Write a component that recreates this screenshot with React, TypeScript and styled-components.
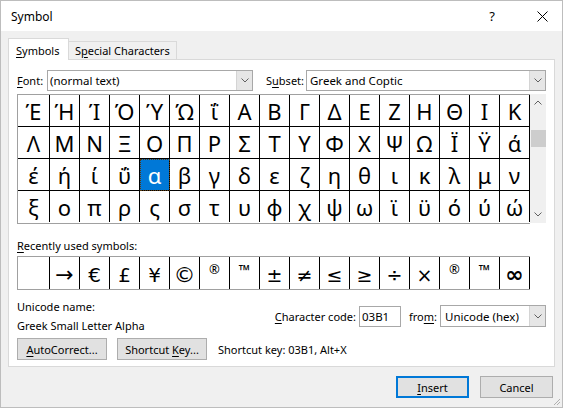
import styled, { createGlobalStyle } from "styled-components";

const GlobalStyle = createGlobalStyle`
  * { box-sizing: border-box; }
  html, body { margin: 0; padding: 0; background: #fff; }
  body {
    font-family: "Noto Sans", "Open Sans", sans-serif;
    font-size: 11px;
    color: #000;
  }
`;

const symbols: string[][] = [
  ["Έ", "Ή", "Ί", "Ό", "Ύ", "Ώ", "ΐ", "Α", "Β", "Γ", "Δ", "Ε", "Ζ", "Η", "Θ", "Ι", "Κ"],
  ["Λ", "Μ", "Ν", "Ξ", "Ο", "Π", "Ρ", "Σ", "Τ", "Υ", "Φ", "Χ", "Ψ", "Ω", "Ϊ", "Ϋ", "ά"],
  ["έ", "ή", "ί", "ΰ", "α", "β", "γ", "δ", "ε", "ζ", "η", "θ", "ι", "κ", "λ", "μ", "ν"],
  ["ξ", "ο", "π", "ρ", "ς", "σ", "τ", "υ", "φ", "χ", "ψ", "ω", "ϊ", "ϋ", "ό", "ύ", "ώ"],
];

interface RecentSymbol {
  char: string;
  size: number;
  raise?: boolean;
  bold?: boolean;
}

const recent: RecentSymbol[] = [
  { char: "", size: 20 },
  { char: "→", size: 22 },
  { char: "€", size: 20 },
  { char: "£", size: 20 },
  { char: "¥", size: 20 },
  { char: "©", size: 22 },
  { char: "®", size: 13, raise: true },
  { char: "™", size: 15, raise: true, bold: true },
  { char: "±", size: 19 },
  { char: "≠", size: 19 },
  { char: "≤", size: 19 },
  { char: "≥", size: 19 },
  { char: "÷", size: 19 },
  { char: "×", size: 19 },
  { char: "®", size: 13, raise: true },
  { char: "™", size: 15, raise: true, bold: true },
  { char: "∞", size: 22, bold: true },
];

const Window = styled.div`
  position: relative;
  width: 563px;
  height: 408px;
  border: 1px solid #bdbdbd;
  background: #f0f0f0;
  display: flex;
  flex-direction: column;
`;

const TitleBar = styled.div`
  height: 30px;
  background: #fff;
  display: flex;
  align-items: center;
  padding-left: 10px;
  font-size: 12px;
`;

const Title = styled.div`
  flex: 1;
`;

const TitleButton = styled.div<{ $gap?: number }>`
  width: 40px;
  height: 30px;
  display: flex;
  align-items: center;
  justify-content: center;
  margin-right: ${({ $gap }) => $gap ?? 0}px;
  font-size: 13px;
`;

const Body = styled.div`
  padding: 7px 7px 0 7px;
  display: flex;
  flex-direction: column;
`;

const TabStrip = styled.div`
  display: flex;
  align-items: flex-end;
  height: 22px;
  margin-bottom: -1px;
  position: relative;
  z-index: 1;
`;

const Tab = styled.div<{ $active?: boolean; $width: number }>`
  width: ${({ $width }) => $width}px;
  height: ${({ $active }) => ($active ? 22 : 19)}px;
  padding: ${({ $active }) => ($active ? "2px 0 0 7px" : "0 0 0 6px")};
  border: 1px solid #d9d9d9;
  border-left: ${({ $active }) => ($active ? "1px solid #d9d9d9" : "none")};
  border-bottom: ${({ $active }) => ($active ? "none" : "1px solid #d9d9d9")};
  background: ${({ $active }) => ($active ? "#fff" : "#f0f0f0")};
  display: flex;
  align-items: center;
  white-space: nowrap;
`;

const Key = styled.span`
  text-decoration: underline;
  text-underline-offset: 2px;
`;

const Panel = styled.div`
  height: 308px;
  background: #fff;
  border: 1px solid #d9d9d9;
  padding: 10px 8px 0 8px;
  display: flex;
  flex-direction: column;
`;

const FieldRow = styled.div`
  display: flex;
  align-items: center;
  height: 21px;
`;

const FieldLabel = styled.div<{ $width?: number; $left?: number }>`
  width: ${({ $width }) => ($width ? `${$width}px` : "auto")};
  margin-left: ${({ $left }) => $left ?? 0}px;
  white-space: nowrap;
`;

const Select = styled.div<{ $width?: number; $height?: number; $left?: number }>`
  ${({ $width }) => ($width ? `width: ${$width}px;` : "flex: 1;")}
  height: ${({ $height }) => $height ?? 21}px;
  margin-left: ${({ $left }) => $left ?? 0}px;
  border: 1px solid #a8a8a8;
  background: #fff;
  display: flex;
  align-items: stretch;
`;

const SelectText = styled.div<{ $pad?: number }>`
  flex: 1;
  display: flex;
  align-items: center;
  padding-left: ${({ $pad }) => $pad ?? 2}px;
  white-space: nowrap;
  font-size: 11.5px;
`;

const SelectArrow = styled.div`
  width: 16px;
  background: #e6e6e6;
  border-left: 1px solid #d4d4d4;
  display: flex;
  align-items: center;
  justify-content: center;
`;

const GridWrap = styled.div`
  margin-top: 3px;
  display: flex;
`;

const CharGrid = styled.div`
  width: 513px;
  display: grid;
  grid-template-columns: 32px repeat(16, 30px);
  grid-auto-rows: 32px;
  border: 1px solid #a0a0a0;
  border-right: none;
`;

const Cell = styled.div<{ $selected?: boolean; $lastRow?: boolean }>`
  height: ${({ $lastRow }) => ($lastRow ? 31 : 32)}px;
  border-right: 1px solid #000;
  border-bottom: ${({ $lastRow }) => ($lastRow ? "none" : "1px solid #000")};
  display: flex;
  align-items: center;
  justify-content: center;
  font-family: "Noto Sans", sans-serif;
  font-size: 22px;
  line-height: 1;
  padding-top: 1px;
  background: ${({ $selected }) => ($selected ? "#0078d7" : "#fff")};
  color: ${({ $selected }) => ($selected ? "#fff" : "#000")};
  outline: ${({ $selected }) => ($selected ? "1px dotted #5a3a10" : "none")};
  outline-offset: -1px;
`;

const Scrollbar = styled.div`
  width: 16px;
  height: 129px;
  background: #f0f0f0;
  display: flex;
  flex-direction: column;
`;

const ScrollArrow = styled.div`
  height: 17px;
  display: flex;
  align-items: center;
  justify-content: center;
`;

const ScrollTrack = styled.div`
  flex: 1;
`;

const ScrollThumb = styled.div`
  height: 17px;
  margin: 19px 0 0 1px;
  background: #cdcdcd;
`;

const SectionLabel = styled.div`
  margin-top: 14px;
  line-height: 15px;
`;

const RecentRow = styled.div`
  margin-top: 3px;
  width: 513px;
  height: 34px;
  display: grid;
  grid-template-columns: 32px repeat(16, 30px);
  border: 1px solid #a0a0a0;
  border-right: none;
`;

const RecentCell = styled.div<{ $size: number; $raise?: boolean; $bold?: boolean }>`
  border-right: 1px solid #000;
  display: flex;
  justify-content: center;
  align-items: ${({ $raise }) => ($raise ? "flex-start" : "center")};
  padding-top: ${({ $raise }) => ($raise ? 6 : 4)}px;
  font-family: ${({ $raise }) =>
    $raise ? '"Noto Sans", sans-serif' : '"DejaVu Sans", "Noto Sans", sans-serif'};
  font-size: ${({ $size }) => $size}px;
  font-weight: ${({ $bold }) => ($bold ? 700 : 400)};
  line-height: 1;
`;

const InfoRow = styled.div`
  margin-top: 7px;
  display: flex;
  align-items: center;
`;

const InfoColumn = styled.div`
  line-height: 19px;
`;

const CodeGroup = styled.div`
  margin-left: auto;
  display: flex;
  align-items: center;
`;

const CodeInput = styled.div`
  width: 42px;
  height: 21px;
  margin: 0 8px 0 3px;
  border: 1px solid #a8a8a8;
  padding-left: 2px;
  display: flex;
  align-items: center;
  font-size: 11.5px;
`;

const ButtonRow = styled.div`
  margin-top: 3px;
  display: flex;
  align-items: center;
  gap: 10px;
`;

const Button = styled.div<{ $width: number; $primary?: boolean }>`
  width: ${({ $width }) => $width}px;
  height: 22px;
  background: #e1e1e1;
  border: ${({ $primary }) => ($primary ? "2px solid #0078d7" : "1px solid #adadad")};
  display: flex;
  align-items: center;
  justify-content: center;
  white-space: nowrap;
`;

const ShortcutNote = styled.div`
  margin-left: 1px;
`;

const Footer = styled.div`
  display: flex;
  justify-content: flex-end;
  gap: 11px;
  padding: 9px 2px 0 0;
`;

const Grip = styled.svg`
  position: absolute;
  right: 1px;
  bottom: 1px;
`;

const Chevron = ({ up }: { up?: boolean }) => (
  <svg width="8" height="5" viewBox="0 0 8 5">
    <path
      d={up ? "M0.5 4.5 L4 1 L7.5 4.5" : "M0.5 0.5 L4 4 L7.5 0.5"}
      fill="none"
      stroke="#606060"
      strokeWidth="1"
    />
  </svg>
);

const App = () => {
  return (
    <>
      <GlobalStyle />
      <Window>
        <TitleBar>
          <Title>Symbol</Title>
          <TitleButton $gap={10}>?</TitleButton>
          <TitleButton>
            <svg width="11" height="11" viewBox="0 0 11 11">
              <path d="M0.5 0.5 L10.5 10.5 M10.5 0.5 L0.5 10.5" stroke="#000" strokeWidth="1" />
            </svg>
          </TitleButton>
        </TitleBar>
        <Body>
          <TabStrip>
            <Tab $active $width={61}>
              <span>
                <Key>S</Key>ymbols
              </span>
            </Tab>
            <Tab $width={108}>
              <span>
                S<Key>p</Key>ecial Characters
              </span>
            </Tab>
          </TabStrip>
          <Panel>
            <FieldRow>
              <FieldLabel $width={30}>
                <Key>F</Key>ont:
              </FieldLabel>
              <Select $width={206}>
                <SelectText>(normal text)</SelectText>
                <SelectArrow>
                  <Chevron />
                </SelectArrow>
              </Select>
              <FieldLabel $width={40} $left={13}>
                S<Key>u</Key>bset:
              </FieldLabel>
              <Select>
                <SelectText $pad={3}>Greek and Coptic</SelectText>
                <SelectArrow>
                  <Chevron />
                </SelectArrow>
              </Select>
            </FieldRow>

            <GridWrap>
              <CharGrid>
                {symbols.map((row, r) =>
                  row.map((ch, c) => (
                    <Cell key={`${r}-${c}`} $selected={r === 2 && c === 4} $lastRow={r === 3}>
                      {ch}
                    </Cell>
                  ))
                )}
              </CharGrid>
              <Scrollbar>
                <ScrollArrow>
                  <Chevron up />
                </ScrollArrow>
                <ScrollTrack>
                  <ScrollThumb />
                </ScrollTrack>
                <ScrollArrow>
                  <Chevron />
                </ScrollArrow>
              </Scrollbar>
            </GridWrap>

            <SectionLabel>
              <Key>R</Key>ecently used symbols:
            </SectionLabel>
            <RecentRow>
              {recent.map((s, i) => (
                <RecentCell key={i} $size={s.size} $raise={s.raise} $bold={s.bold}>
                  {s.char}
                </RecentCell>
              ))}
            </RecentRow>

            <InfoRow>
              <InfoColumn>
                <div>Unicode name:</div>
                <div>Greek Small Letter Alpha</div>
              </InfoColumn>
              <CodeGroup>
                <FieldLabel>
                  <Key>C</Key>haracter code:
                </FieldLabel>
                <CodeInput>03B1</CodeInput>
                <FieldLabel>
                  fro<Key>m</Key>:
                </FieldLabel>
                <Select $width={106} $height={22} $left={3}>
                  <SelectText $pad={4}>Unicode (hex)</SelectText>
                  <SelectArrow>
                    <Chevron />
                  </SelectArrow>
                </Select>
              </CodeGroup>
            </InfoRow>

            <ButtonRow>
              <Button $width={90}>
                <span>
                  <Key>A</Key>utoCorrect...
                </span>
              </Button>
              <Button $width={90}>
                <span>
                  Shortcut <Key>K</Key>ey...
                </span>
              </Button>
              <ShortcutNote>Shortcut key: 03B1, Alt+X</ShortcutNote>
            </ButtonRow>
          </Panel>
          <Footer>
            <Button $width={73} $primary>
              <span>
                <Key>I</Key>nsert
              </span>
            </Button>
            <Button $width={73}>Cancel</Button>
          </Footer>
        </Body>
        <Grip width="10" height="10" viewBox="0 0 10 10">
          <path d="M9 3 L3 9 M9 6 L6 9" stroke="#b0b0b0" strokeWidth="1" />
        </Grip>
      </Window>
    </>
  );
};

export default App;
